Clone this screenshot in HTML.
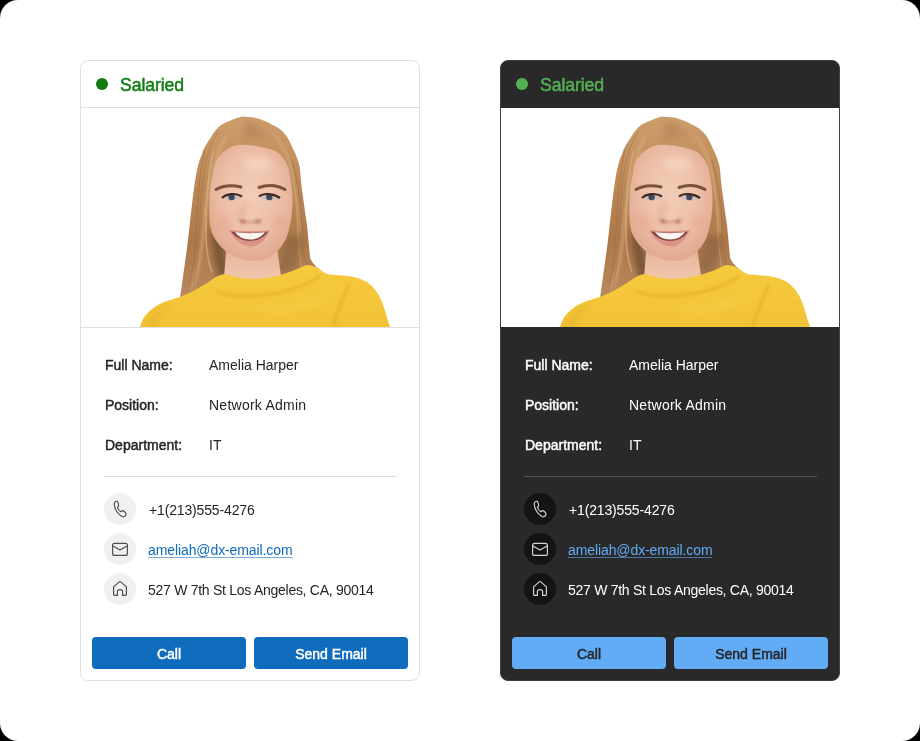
<!DOCTYPE html>
<html><head><meta charset="utf-8">
<style>
html,body{margin:0;padding:0;background:#000;}
body{width:920px;height:741px;overflow:hidden;position:relative;font-family:"Liberation Sans",sans-serif;}
.page{position:absolute;left:0;top:0;width:920px;height:741px;background:#fff;border-radius:18px;}
.card{will-change:transform;position:absolute;top:60px;width:338px;height:619px;border:1px solid #e0e0e0;border-radius:8px;background:#fff;overflow:hidden;}
.card.l{left:80px;}
.card.d{left:500px;background:#292929;border-color:#404040;}
.hdr{position:absolute;left:0;top:0;width:338px;height:46px;border-bottom:1px solid #e0e0e0;}
.d .hdr{border-bottom-color:#292929;}
.dot{position:absolute;left:15px;top:17px;width:12px;height:12px;border-radius:50%;background:#107c10;}
.d .dot{background:#54b054;}
.stat{position:absolute;left:39px;top:14px;font-size:19px;font-weight:normal;color:#107c10;line-height:20px;letter-spacing:-0.1px;-webkit-text-stroke:0.5px currentColor;transform:scaleX(0.93);transform-origin:0 0;}
.d .stat{color:#54b054;}
.photo{position:absolute;left:0;top:47px;width:338px;height:219px;background:#fff;border-bottom:1px solid #e0e0e0;overflow:hidden;}
.d .photo{border-bottom-color:#292929;}
.row{position:absolute;left:24px;font-size:14px;line-height:16px;color:#242424;}
.d .row{color:#fff;}
.row b{position:absolute;left:0;top:0;white-space:nowrap;font-weight:normal;-webkit-text-stroke:0.45px currentColor;}
.row span{position:absolute;left:104px;top:0;white-space:nowrap;}
.sep{position:absolute;left:23px;top:415px;width:293px;height:1px;background:#e0e0e0;}
.d .sep{background:#525252;}
.ic{position:absolute;left:23px;width:32px;height:32px;border-radius:50%;background:#f0f0f0;}
.d .ic{background:#141414;}
.ic svg{position:absolute;left:0;top:0;width:32px;height:32px;}
.ic{color:#4d4d4d;}
.d .ic{color:#d6d6d6;}
.ct{position:absolute;left:67px;font-size:14px;line-height:16px;color:#242424;white-space:nowrap;}
.d .ct{color:#fff;}
.ct a{color:#0f6cbd;text-decoration:underline;text-decoration-color:rgba(15,108,189,0.55);text-underline-offset:2px;}
.d .ct a{color:#62abf5;text-decoration-color:rgba(98,171,245,0.6);}
.btn{position:absolute;top:576px;width:154px;height:32px;border-radius:4px;background:#0f6cbd;color:#fff;font-size:14px;font-weight:normal;line-height:34px;text-align:center;-webkit-text-stroke:0.45px currentColor;}
.d .btn{background:#62abf5;color:#242424;}
.b1{left:11px;}
.b2{left:173px;}
</style></head>
<body>
<div class="page"></div>

<div class="card l">
  <div class="hdr"><div class="dot"></div><div class="stat">Salaried</div></div>
  <div class="photo"></div>
  <div class="row" style="top:296px"><b>Full Name:</b><span>Amelia Harper</span></div>
  <div class="row" style="top:336px"><b>Position:</b><span style="letter-spacing:0.25px">Network Admin</span></div>
  <div class="row" style="top:376px"><b>Department:</b><span>IT</span></div>
  <div class="sep"></div>
  <div class="ic" style="top:432px"><svg width="32" height="32" viewBox="0 0 32 32"><path fill="none" stroke="currentColor" stroke-width="1.15" stroke-linejoin="round" d="M12.6,8.2 C11,8.5 10,9.9 10.3,12 C10.9,16.3 14.2,21.2 18.1,23.5 C19.6,24.3 21.1,23.4 21.8,21.9 C22.2,21 21.9,20 21.1,19.3 L20,18.3 C19.2,17.6 18.1,17.6 17.4,18.2 L16.8,18.7 C15.2,17.7 14,16.2 13.4,14.4 L13.9,13.9 C14.6,13.2 14.8,12.2 14.5,11.4 L14,9.6 C13.7,8.7 13.2,8.1 12.6,8.2 Z"/></svg></div><div class="ct" style="top:441px;left:68px;letter-spacing:-0.15px">+1(213)555-4276</div>
  <div class="ic" style="top:472px"><svg width="32" height="32" viewBox="0 0 32 32"><rect x="8.6" y="10.3" width="14.8" height="12.1" rx="2" fill="none" stroke="currentColor" stroke-width="1.15"/><path fill="none" stroke="currentColor" stroke-width="1.15" stroke-linejoin="round" d="M8.9,13 L16,17 L23.1,13"/></svg></div><div class="ct" style="top:481px;letter-spacing:-0.1px"><a>ameliah@dx-email.com</a></div>
  <div class="ic" style="top:512px"><svg width="32" height="32" viewBox="0 0 32 32"><path fill="none" stroke="currentColor" stroke-width="1.15" stroke-linejoin="round" d="M9.6,13.9 L15.2,8.9 Q16,8.2 16.8,8.9 L22.4,13.9 L22.4,21.6 Q22.4,22.4 21.6,22.4 L18.6,22.4 L18.6,18.6 Q18.6,16.6 16,16.6 Q13.4,16.6 13.4,18.6 L13.4,22.4 L10.4,22.4 Q9.6,22.4 9.6,21.6 Z"/></svg></div><div class="ct" style="top:521px;letter-spacing:-0.27px">527 W 7th St Los Angeles, CA, 90014</div>
  <div class="btn b1">Call</div><div class="btn b2">Send Email</div>
</div>

<div class="card d">
  <div class="hdr"><div class="dot"></div><div class="stat">Salaried</div></div>
  <div class="photo"></div>
  <div class="row" style="top:296px"><b>Full Name:</b><span>Amelia Harper</span></div>
  <div class="row" style="top:336px"><b>Position:</b><span style="letter-spacing:0.25px">Network Admin</span></div>
  <div class="row" style="top:376px"><b>Department:</b><span>IT</span></div>
  <div class="sep"></div>
  <div class="ic" style="top:432px"><svg width="32" height="32" viewBox="0 0 32 32"><path fill="none" stroke="currentColor" stroke-width="1.15" stroke-linejoin="round" d="M12.6,8.2 C11,8.5 10,9.9 10.3,12 C10.9,16.3 14.2,21.2 18.1,23.5 C19.6,24.3 21.1,23.4 21.8,21.9 C22.2,21 21.9,20 21.1,19.3 L20,18.3 C19.2,17.6 18.1,17.6 17.4,18.2 L16.8,18.7 C15.2,17.7 14,16.2 13.4,14.4 L13.9,13.9 C14.6,13.2 14.8,12.2 14.5,11.4 L14,9.6 C13.7,8.7 13.2,8.1 12.6,8.2 Z"/></svg></div><div class="ct" style="top:441px;left:68px;letter-spacing:-0.15px">+1(213)555-4276</div>
  <div class="ic" style="top:472px"><svg width="32" height="32" viewBox="0 0 32 32"><rect x="8.6" y="10.3" width="14.8" height="12.1" rx="2" fill="none" stroke="currentColor" stroke-width="1.15"/><path fill="none" stroke="currentColor" stroke-width="1.15" stroke-linejoin="round" d="M8.9,13 L16,17 L23.1,13"/></svg></div><div class="ct" style="top:481px;letter-spacing:-0.1px"><a>ameliah@dx-email.com</a></div>
  <div class="ic" style="top:512px"><svg width="32" height="32" viewBox="0 0 32 32"><path fill="none" stroke="currentColor" stroke-width="1.15" stroke-linejoin="round" d="M9.6,13.9 L15.2,8.9 Q16,8.2 16.8,8.9 L22.4,13.9 L22.4,21.6 Q22.4,22.4 21.6,22.4 L18.6,22.4 L18.6,18.6 Q18.6,16.6 16,16.6 Q13.4,16.6 13.4,18.6 L13.4,22.4 L10.4,22.4 Q9.6,22.4 9.6,21.6 Z"/></svg></div><div class="ct" style="top:521px;letter-spacing:-0.27px">527 W 7th St Los Angeles, CA, 90014</div>
  <div class="btn b1">Call</div><div class="btn b2">Send Email</div>
</div>
<svg style="position:absolute;left:0;top:0" width="920" height="741" viewBox="0 0 920 741">
<clipPath id="cp1"><rect x="81" y="108" width="338" height="219"/></clipPath>
<clipPath id="cp2"><rect x="501" y="108" width="338" height="219"/></clipPath>
<defs>
  <radialGradient id="skin" cx="0.5" cy="0.42" r="0.62">
    <stop offset="0" stop-color="#f3cdb8"/>
    <stop offset="0.55" stop-color="#edbfa8"/>
    <stop offset="1" stop-color="#dfa68c"/>
  </radialGradient>
  <linearGradient id="hair" x1="0" y1="0" x2="0" y2="1">
    <stop offset="0" stop-color="#cc9d6c"/>
    <stop offset="0.35" stop-color="#bd8957"/>
    <stop offset="0.7" stop-color="#ab784a"/>
    <stop offset="1" stop-color="#b8895c"/>
  </linearGradient>
  <linearGradient id="neck" x1="0" y1="0" x2="0" y2="1">
    <stop offset="0" stop-color="#d9a088"/>
    <stop offset="0.45" stop-color="#ebbaa2"/>
    <stop offset="1" stop-color="#f0c8ae"/>
  </linearGradient>
  <linearGradient id="sw" x1="0" y1="0" x2="0" y2="1">
    <stop offset="0" stop-color="#f6ca3c"/>
    <stop offset="1" stop-color="#f2c236"/>
  </linearGradient>
  <filter id="bl" filterUnits="userSpaceOnUse" x="0" y="0" width="920" height="741"><feGaussianBlur stdDeviation="0.5"/></filter>
  <filter id="bl2" filterUnits="userSpaceOnUse" x="0" y="0" width="920" height="741"><feGaussianBlur stdDeviation="1.5"/></filter>
  <filter id="bl3" filterUnits="userSpaceOnUse" x="0" y="0" width="920" height="741"><feGaussianBlur stdDeviation="3"/></filter>
</defs>
<defs><g id="woman-src">
  <!-- hair back -->
  <path filter="url(#bl)" fill="url(#hair)" d="M242,116.5 C238,117.5 234,119 230,120.7 C226.5,122 223.5,123.5 221,125 C217,128 214,132 211.7,136 C207,143 203.5,148 202,154 C199,161 197.5,167 196.2,174 C194,187 192.5,200 191,213 C189.5,225 188.5,237 187,248 C185.5,259 184,270 182.5,280 C181.5,287 181,292 180,297 L225,292 L305,282 L323,272 C316,267 311,262 310,257 C309,246 308,236 307,225 C305,212 303.5,200 302,190 C301,182 300.5,174 299.7,167 C298,160 296,154 293,149 C291,144 288.5,139.5 286.5,136 C282,130 277.5,127 272.6,125 C269.5,123 267,121.5 264,120.7 C258,118 252,117 247,117 C245,116.8 243.5,116.6 242,116.5 Z"/>
  <!-- parting darker -->
  <path filter="url(#bl3)" fill="#a97a52" opacity="0.45" d="M244,121 C252,122 262,128 268,137 C258,136 250,138 244,142 C245,134 245,127 244,121 Z"/>
  <!-- hair highlights -->
  <path filter="url(#bl2)" fill="none" stroke="#e0b989" stroke-width="3" opacity="0.55" d="M226,136 C214,156 207,186 204,226 C202,252 198,272 192,290"/>
  <path filter="url(#bl2)" fill="none" stroke="#dcb283" stroke-width="2.5" opacity="0.5" d="M276,136 C290,156 297,190 300,232"/>
  <!-- strands -->
  <path filter="url(#bl)" fill="none" stroke="#d9b186" stroke-width="1.6" opacity="0.7" d="M214,150 C208,170 206,200 206,230 C206,250 208,262 212,272"/>
  <path filter="url(#bl)" fill="none" stroke="#9c6c44" stroke-width="1" opacity="0.6" d="M205,150 C199,175 197,205 196,235 C195,255 193,270 189,285"/>
  <path filter="url(#bl)" fill="none" stroke="#a0704a" stroke-width="1" opacity="0.5" d="M218,132 C206,150 201,180 200,215 C199,245 197,268 193,290"/>
  <path filter="url(#bl)" fill="none" stroke="#d2a87c" stroke-width="1.2" opacity="0.6" d="M286,150 C294,170 297,200 298,235 C299,250 300,262 303,272"/>
  <path filter="url(#bl)" fill="none" stroke="#986a44" stroke-width="1" opacity="0.55" d="M292,160 C299,185 302,215 303,245 C304,258 306,266 312,272"/>
  <!-- dark hair shadows near neck -->
  <path filter="url(#bl3)" fill="#6a4a30" opacity="0.75" d="M211,230 C212,250 215,266 220,284 L232,280 C227,264 224,250 222,234 Z"/>
  <path filter="url(#bl3)" fill="#86603f" opacity="0.6" d="M284,236 C283,250 280,262 275,274 L294,272 C298,260 300,248 301,236 Z"/>
  <!-- neck -->
  <path filter="url(#bl)" fill="url(#neck)" d="M227,240 L276,240 L281,276 C268,282 242,284 224,278 Z"/>
  <!-- face -->
  <path filter="url(#bl)" fill="url(#skin)" d="M213,174 C214,167 215.5,161 217.6,158 C223,151 230,146.5 237,145 C243,144.5 250,145 256.7,146.3 C264,147.5 271,149 276.3,151.5 C282,155 285.5,161 288,167 C291,178 293,192 292.5,204 C292,216 290,228 286.6,237.2 C283,246 277,252 271.4,255.9 C266,259.5 260,261 254.4,261 C246,261 236,258 227.3,252.5 C220,247 215,240 212,233 C209.5,226 209,214 209.4,201.7 C209.5,192 210.5,182 213,174 Z"/>
  <!-- cheeks -->
  <ellipse filter="url(#bl3)" cx="224" cy="222" rx="7" ry="8" fill="#e8a48c" opacity="0.45"/>
  <ellipse filter="url(#bl3)" cx="279" cy="222" rx="7" ry="8" fill="#e8a48c" opacity="0.45"/>
  <!-- forehead highlight -->
  <ellipse filter="url(#bl3)" cx="258" cy="164" rx="14" ry="8" fill="#f8dccd" opacity="0.5"/>
  <!-- eyebrows -->
  <path filter="url(#bl)" fill="none" stroke="#7d5238" stroke-width="3" stroke-linecap="round" d="M216,189.5 C222,186 232,185 241,187"/>
  <path filter="url(#bl)" fill="none" stroke="#7d5238" stroke-width="3" stroke-linecap="round" d="M259,187.5 C266,185 276,184.5 285,189.5"/>
  <!-- eyes -->
  <ellipse filter="url(#bl)" cx="232" cy="197.2" rx="9.5" ry="3.6" fill="#d8c0b6"/>
  <ellipse filter="url(#bl)" cx="270" cy="197.2" rx="9.5" ry="3.6" fill="#d8c0b6"/>
  <circle filter="url(#bl)" cx="231.6" cy="197" r="3.2" fill="#3a4862"/>
  <circle filter="url(#bl)" cx="269.3" cy="197" r="3.2" fill="#3a4862"/>
  <path filter="url(#bl)" fill="none" stroke="#3e2a22" stroke-width="2.2" d="M222,198 C226,193.5 236,192.5 242,196.5"/>
  <path filter="url(#bl)" fill="none" stroke="#3e2a22" stroke-width="2.2" d="M259,196.5 C264,192.5 274,193.5 280,198"/>
  <!-- nose -->
  <path filter="url(#bl3)" fill="#d89880" opacity="0.55" d="M243,202 L247,202 L243,217 L238,219 Z"/>
  <path filter="url(#bl2)" fill="#c27c66" opacity="0.7" d="M238,218 C240,224.5 260,224.5 263,218 C259,222 242,222 238,218 Z"/>
  <ellipse filter="url(#bl2)" cx="243" cy="221.5" rx="3" ry="1.8" fill="#a8604e" opacity="0.75"/>
  <ellipse filter="url(#bl2)" cx="258" cy="221.5" rx="3" ry="1.8" fill="#a8604e" opacity="0.75"/>
  <ellipse filter="url(#bl3)" cx="251" cy="216" rx="5" ry="3" fill="#f6d4c2" opacity="0.6"/>
  <!-- mouth -->
  <path filter="url(#bl)" fill="#dc948a" d="M229,230 C240,231.5 260,231.5 270,230 C266,240 259,246.5 251,246.5 C242,246.5 234,240 229,230 Z"/>
  <path filter="url(#bl)" fill="#8a4640" d="M231,231.5 C241,233 259,233 268,231.5 C265,237 258,241 250,241 C242,241 235,237 231,231.5 Z"/>
  <path filter="url(#bl)" fill="#fbf6f2" d="M235,232 C243,233.5 257,233.5 265,232 C262,236.5 257,239.5 250,239.5 C243,239.5 238,236.5 235,232 Z"/>
  <!-- sweater -->
  <path filter="url(#bl)" fill="url(#sw)" d="M136,330 L140.3,326.3 C142,320 144.5,316 147.6,313.1 C151,309.5 155,306.5 159.4,304.3 C166,301 173,299 179.9,297 C191,293 203,286 213.5,278.5 C217,276 221,274.5 225,274 C235,277 244,279 253,279 C272,279 292,272 306,265 C310,265 314,266 318,268 C322,271 325,273.5 328,274.2 C336,275 344,275.5 350.4,276.3 C356,277.5 361,279 365.6,281.3 C370,284 373,287 375.7,290.4 C378.5,294 380.5,297.5 381.8,301.6 C383.5,305.5 384.7,309.5 385.8,313.7 C387,318 388.5,322 389.9,326.4 L392,330 Z"/>
  <!-- sweater shading -->
  <path filter="url(#bl3)" fill="#d9a020" opacity="0.4" d="M146,328 C149,316 158,307 172,302 C162,311 157,319 155,328 Z"/>
  <path filter="url(#bl2)" fill="none" stroke="#d59c1c" stroke-width="2.2" opacity="0.5" d="M216,291 C236,300 286,298 320,276"/>
  <path filter="url(#bl3)" fill="#f8d454" opacity="0.35" d="M236,302 C262,310 300,302 338,292 C320,312 270,320 236,302 Z"/>
  <path filter="url(#bl2)" fill="none" stroke="#dfa61e" stroke-width="3" opacity="0.55" d="M349,283 C344,295 338,310 333,326"/>
</g></defs>
<g clip-path="url(#cp1)"><use href="#woman-src"/></g>
<g clip-path="url(#cp2)"><use href="#woman-src" x="420"/></g>
</svg>
</body></html>
